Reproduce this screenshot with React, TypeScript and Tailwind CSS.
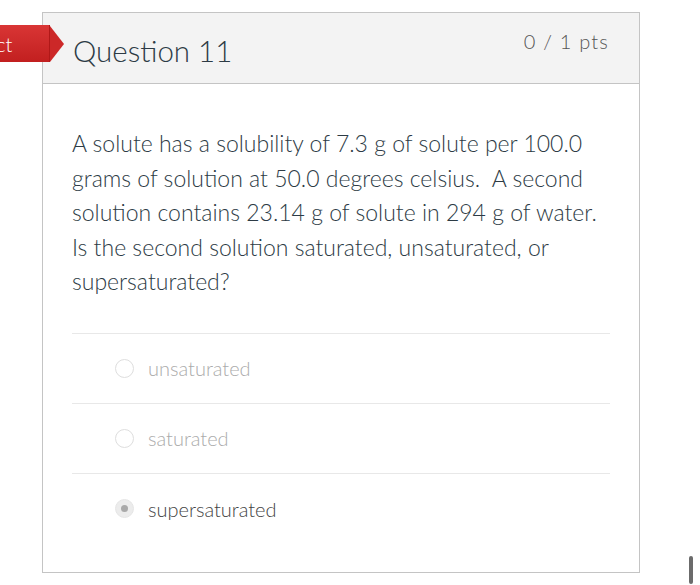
import React from 'react';

const options = [
  { label: 'unsaturated', selected: false },
  { label: 'saturated', selected: false },
  { label: 'supersaturated', selected: true },
];

function Radio({ selected }: { selected: boolean }) {
  return (
    <span
      className={`flex h-[19px] w-[19px] shrink-0 items-center justify-center rounded-full border ${
        selected ? 'border-[#e6e6e6] bg-[#ececec]' : 'border-[#dedede] bg-white'
      }`}
    >
      {selected && <span className="h-[7px] w-[7px] rounded-full bg-[#a9a9a9]" />}
    </span>
  );
}

export default function App() {
  return (
    <div className="relative h-[585px] w-[700px] overflow-hidden bg-white font-['Lato',sans-serif] font-light">
      <div className="pl-[42px] pt-[12px]">
        <div className="relative h-[561px] w-[598px] border border-[#c4c4c4]">
          {/* Header */}
          <div className="flex h-[71px] items-start justify-between border-b border-[#c4c4c4] bg-[#f3f3f3] pl-[30px] pr-[30px]">
            <h2 className="pt-[19px] text-[29.5px] leading-[38px] text-[#2d3b45]">Question 11</h2>
            <span className="pt-[14px] text-[20px] leading-[28px] tracking-[0.06em] text-[#555]">0 / 1 pts</span>
          </div>

          {/* Body */}
          <div className="px-[29px] pt-[42px]">
            <p className="w-[530px] text-[23px] leading-[34.5px] text-[#2d3b45]">
              A solute has a solubility of 7.3 g of solute per 100.0 grams of solution at 50.0 degrees celsius.&nbsp; A second solution contains 23.14 g of solute in 294 g of water. Is the second solution saturated, unsaturated, or supersaturated?
            </p>

            <div className="mt-[34px] border-t border-[#e8e8e8]">
              {options.map((o, i) => (
                <div
                  key={o.label}
                  className={`flex h-[70px] items-center gap-[14px] pl-[43px] ${
                    i < options.length - 1 ? 'border-b border-[#e8e8e8]' : ''
                  }`}
                >
                  <Radio selected={o.selected} />
                  <span className={`text-[20px] ${o.selected ? 'text-[#444]' : 'text-[#ababab]'}`}>{o.label}</span>
                </div>
              ))}
            </div>
          </div>
        </div>
      </div>

      {/* Red tag */}
      <div className="absolute left-0 top-[25px] flex h-[37px] items-center">
        <div className="flex h-full w-[50px] items-center border-r border-[#b01818] bg-gradient-to-b from-[#d93535] to-[#c21f1f]">
          <span className="-ml-[4px] text-[20px] text-white">ct</span>
        </div>
        <div className="h-0 w-0 border-y-[18.5px] border-l-[14px] border-y-transparent border-l-[#cc2828]" />
      </div>

      {/* Scrollbar */}
      <div className="absolute left-[689px] top-[556px] h-[28px] w-[4px] rounded-full bg-[#6b6b6b]" />
    </div>
  );
}
